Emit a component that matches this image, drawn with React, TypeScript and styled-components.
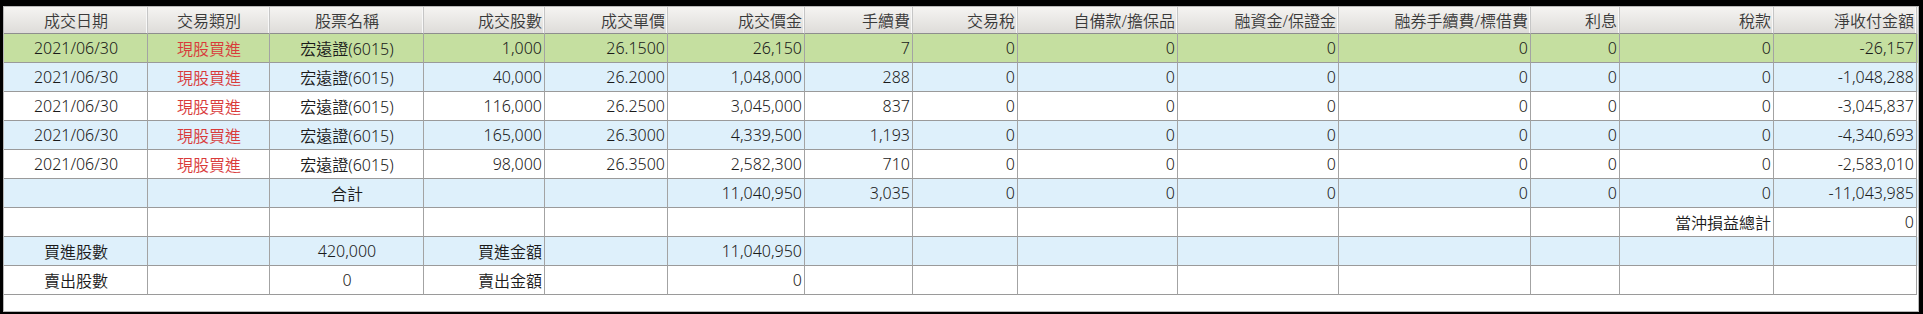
import React, { FC } from "react";
import styled, { createGlobalStyle } from "styled-components";

const GlobalStyle = createGlobalStyle`
  html, body {
    margin: 0;
    padding: 0;
    background: #000;
  }
  body {
    padding: 6px 4px 2px 3px;
    font-family: "Noto Sans", "Noto Sans CJK TC", sans-serif;
  }
`;

const Frame = styled.div`
  box-sizing: border-box;
  width: 1916px;
  height: 306px;
  background: #fff;
  border: 1px solid #b8b8b8;
  overflow: hidden;
`;

const COLS = [144, 122, 154, 121, 123, 137, 108, 105, 160, 161, 192, 89, 154, 143];

const Row = styled.div<{ $bg: string; $h: number }>`
  display: grid;
  grid-template-columns: ${COLS.map((w) => `${w}px`).join(" ")};
  height: ${(p) => p.$h}px;
  background: ${(p) => p.$bg};
`;

const HeadRow = styled(Row)`
  background: linear-gradient(#f5f4f2, #dddbd8);
`;

type Align = "left" | "center" | "right";

const Cell = styled.div<{ $align: Align; $red?: boolean }>`
  box-sizing: border-box;
  display: flex;
  align-items: center;
  justify-content: ${(p) =>
    p.$align === "center" ? "center" : p.$align === "right" ? "flex-end" : "flex-start"};
  padding: 0 2px 1px 3px;
  border-right: 1px solid #a3a3a3;
  border-bottom: 1px solid #9a9a9a;
  font-size: 16px;
  font-weight: 350;
  color: ${(p) => (p.$red ? "#d93a3a" : "#1a1a1a")};
  white-space: nowrap;
  overflow: hidden;
`;

const HeadCell = styled(Cell)`
  color: #3a3a3a;
  border-right: 1px solid #c6c6c6;
  border-bottom: 1px solid #8e8e8e;
  box-shadow: inset -1px 0 0 #f8f8f8;
`;

const headers = [
  "成交日期", "交易類別", "股票名稱", "成交股數", "成交單價", "成交價金", "手續費",
  "交易稅", "自備款/擔保品", "融資金/保證金", "融券手續費/標借費", "利息", "稅款", "淨收付金額",
];

const headAlign: Align[] = headers.map((_, i) => (i < 3 ? "center" : "right"));

const trades = [
  ["1,000", "26.1500", "26,150", "7", "-26,157"],
  ["40,000", "26.2000", "1,048,000", "288", "-1,048,288"],
  ["116,000", "26.2500", "3,045,000", "837", "-3,045,837"],
  ["165,000", "26.3000", "4,339,500", "1,193", "-4,340,693"],
  ["98,000", "26.3500", "2,582,300", "710", "-2,583,010"],
];

const GREEN = "#c5dfa0";
const BLUE = "#def0fb";
const WHITE = "#ffffff";

type CellData = { text?: string; align?: Align; red?: boolean };

const dataRows: CellData[][] = trades.map((t) => [
  { text: "2021/06/30", align: "center" },
  { text: "現股買進", align: "center", red: true },
  { text: "宏遠證(6015)", align: "center" },
  { text: t[0] },
  { text: t[1] },
  { text: t[2] },
  { text: t[3] },
  { text: "0" },
  { text: "0" },
  { text: "0" },
  { text: "0" },
  { text: "0" },
  { text: "0" },
  { text: t[4] },
]);

const totalRow: CellData[] = [
  {}, {}, { text: "合計", align: "center" }, {}, {},
  { text: "11,040,950" }, { text: "3,035" },
  { text: "0" }, { text: "0" }, { text: "0" }, { text: "0" }, { text: "0" }, { text: "0" },
  { text: "-11,043,985" },
];

const dayTradeRow: CellData[] = [
  {}, {}, {}, {}, {}, {}, {}, {}, {}, {}, {}, {},
  { text: "當沖損益總計" }, { text: "0" },
];

const buyRow: CellData[] = [
  { text: "買進股數", align: "center" }, {}, { text: "420,000", align: "center" },
  { text: "買進金額" }, {}, { text: "11,040,950" },
  {}, {}, {}, {}, {}, {}, {}, {},
];

const sellRow: CellData[] = [
  { text: "賣出股數", align: "center" }, {}, { text: "0", align: "center" },
  { text: "賣出金額" }, {}, { text: "0" },
  {}, {}, {}, {}, {}, {}, {}, {},
];

const rows = [...dataRows, totalRow, dayTradeRow, buyRow, sellRow];
const rowBg = (i: number) => (i === 0 ? GREEN : i % 2 === 1 ? BLUE : WHITE);

const TradeTable: FC = () => (
  <Frame>
    <HeadRow $bg="none" $h={27}>
      {headers.map((h, i) => (
        <HeadCell key={h} $align={headAlign[i]}>{h}</HeadCell>
      ))}
    </HeadRow>
    {rows.map((r, ri) => (
      <Row key={ri} $bg={rowBg(ri)} $h={29}>
        {r.map((c, ci) => (
          <Cell key={ci} $align={c.align ?? "right"} $red={c.red}>
            {c.text ?? ""}
          </Cell>
        ))}
      </Row>
    ))}
  </Frame>
);

export default function App() {
  return (
    <>
      <GlobalStyle />
      <TradeTable />
    </>
  );
}
